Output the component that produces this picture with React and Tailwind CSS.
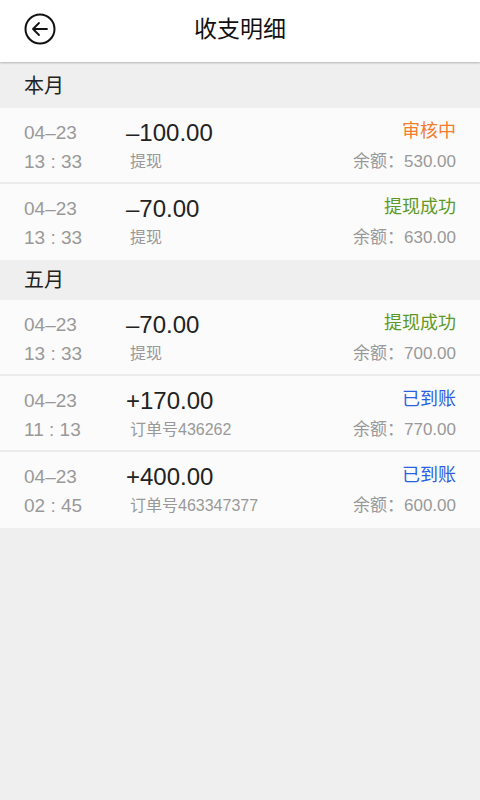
import React from "react";

const sections = [
  {
    title: "本月",
    h: "h-[45px]",
    rows: [
      { date: "04–23", time: "13 : 33", amount: "–100.00", sub: "提现", status: "审核中", color: "text-[#f27d2c]", bal: "530.00" },
      { date: "04–23", time: "13 : 33", amount: "–70.00", sub: "提现", status: "提现成功", color: "text-[#5b9a26]", bal: "630.00" },
    ],
  },
  {
    title: "五月",
    h: "h-[40px]",
    rows: [
      { date: "04–23", time: "13 : 33", amount: "–70.00", sub: "提现", status: "提现成功", color: "text-[#5b9a26]", bal: "700.00" },
      { date: "04–23", time: "11 : 13", amount: "+170.00", sub: "订单号436262", status: "已到账", color: "text-[#2c5fe0]", bal: "770.00" },
      { date: "04–23", time: "02 : 45", amount: "+400.00", sub: "订单号463347377", status: "已到账", color: "text-[#2c5fe0]", bal: "600.00" },
    ],
  },
];

const font = { fontFamily: '"Liberation Sans", "Noto Sans CJK SC", sans-serif' };

function Row({ r, last }) {
  return (
    <div className={`flex bg-[#fbfbfb] px-6 ${last ? "h-[76px]" : "h-[76px] border-b-2 border-[#ececec]"}`}>
      <div className="flex w-[102px] flex-col pt-[10px] text-[19px] leading-[29px] text-[#999999]">
        <span>{r.date}</span>
        <span>{r.time}</span>
      </div>
      <div className="flex flex-1 flex-col pt-[10px]">
        <span className="text-[24px] leading-[30px] text-[#222222]">{r.amount}</span>
        <span className="pl-1 text-[16px] leading-[28px] text-[#999999]">{r.sub}</span>
      </div>
      <div className="flex flex-col items-end pt-[9px]">
        <span className={`text-[18px] leading-[28px] ${r.color}`}>{r.status}</span>
        <span className="text-[17px] leading-[34px] text-[#999999]">余额：{r.bal}</span>
      </div>
    </div>
  );
}

export default function App() {
  return (
    <div className="min-h-[800px] w-[480px] bg-[#efefef]" style={font}>
      <div className="relative flex h-[62px] items-center justify-center bg-white pb-1 shadow-[0_1px_2px_rgba(0,0,0,0.25)]">
        <svg className="absolute left-[24px] top-[13px]" width="32" height="32" viewBox="0 0 32 32" fill="none" stroke="#111" strokeWidth="2">
          <circle cx="16" cy="16" r="14.5" />
          <path d="M23 16H9M15 10l-6 6 6 6" strokeLinecap="round" strokeLinejoin="round" strokeWidth="1.8" />
        </svg>
        <span className="text-[23px] text-[#111111]">收支明细</span>
      </div>
      {sections.map((s, si) => (
        <div key={s.title}>
          <div className={`flex items-center px-6 text-[20px] text-[#222222] ${s.h} ${si === 0 ? "mt-[1px]" : ""}`}>{s.title}</div>
          {s.rows.map((r, i) => (
            <Row key={i} r={r} last={i === s.rows.length - 1} />
          ))}
        </div>
      ))}
    </div>
  );
}
